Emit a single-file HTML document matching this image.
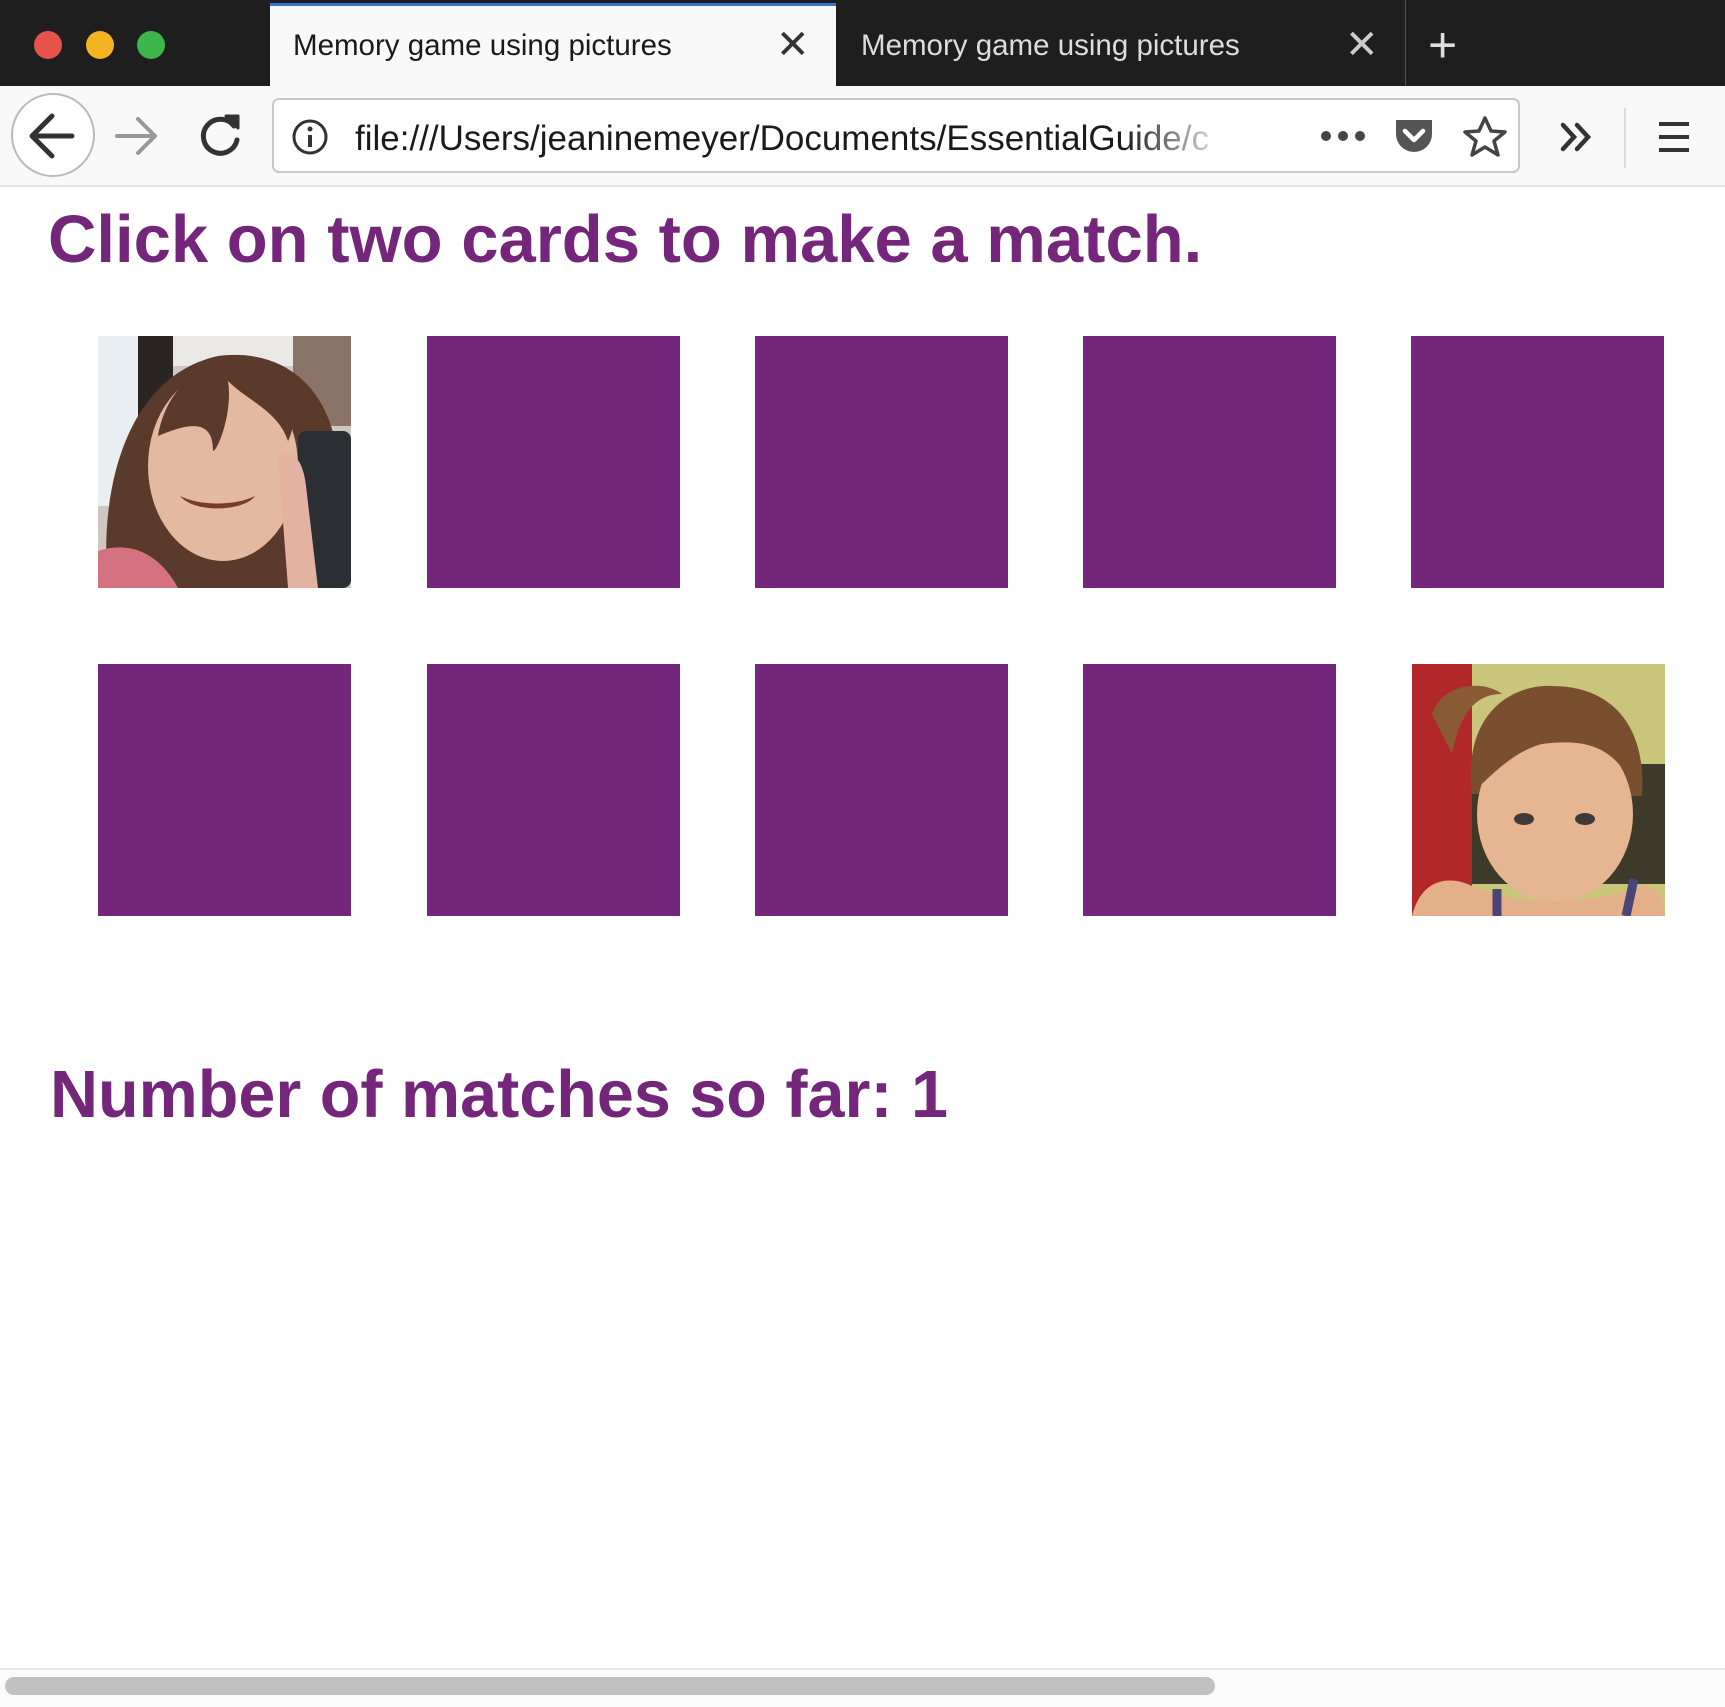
<!DOCTYPE html>
<html><head><meta charset="utf-8"><style>
*{margin:0;padding:0;box-sizing:border-box}
body{width:1725px;height:1707px;background:#fff;position:relative;overflow:hidden;font-family:"Liberation Sans",Arial,sans-serif}
.a{position:absolute}
.card{position:absolute;width:253px;height:252px;background:#74267a}
.h{position:absolute;color:#74267a;font-weight:bold;white-space:nowrap;line-height:1}
</style></head><body>
<div class="a" style="left:0;top:0;width:1725px;height:86px;background:#1e1e1e"></div>
<div class="a" style="left:34px;top:31px;width:28px;height:28px;border-radius:50%;background:#e5534b"></div>
<div class="a" style="left:86px;top:31px;width:28px;height:28px;border-radius:50%;background:#f2b421"></div>
<div class="a" style="left:137px;top:31px;width:28px;height:28px;border-radius:50%;background:#3cb64a"></div>
<div class="a" style="left:270px;top:3px;width:566px;height:84px;background:#f9f9fa;border-top:3px solid #3a73d0"></div>
<div class="a" style="left:293px;top:29px;font-size:29.5px;color:#1a1a1a">Memory game using pictures</div>
<div class="a" style="left:776px;top:22px;font-size:40px;color:#333;font-weight:300">✕</div>
<div class="a" style="left:861px;top:29px;font-size:29.5px;color:#ddd">Memory game using pictures</div>
<div class="a" style="left:1345px;top:22px;font-size:40px;color:#ccc">✕</div>
<div class="a" style="left:1405px;top:0;width:1px;height:86px;background:#555"></div>
<div class="a" style="left:1428px;top:16px;font-size:50px;color:#ddd;font-weight:300">+</div>
<div class="a" style="left:0;top:86px;width:1725px;height:101px;background:#f9f9fa;border-bottom:2px solid #e2e2e2"></div>
<div class="a" style="left:11px;top:93px;width:84px;height:84px;border-radius:50%;border:2px solid #bbb;background:#fff"></div>
<svg class="a" style="left:0;top:86px" width="272" height="100">
<path d="M32 50h40M52 30 32 50 52 70" stroke="#333" stroke-width="5" fill="none" stroke-linecap="round" stroke-linejoin="round"/>
<path d="M117 50h38M138 33 155 50 138 67" stroke="#999" stroke-width="4" fill="none" stroke-linecap="round" stroke-linejoin="round"/>
<path d="M234 40a17 17 0 1 0 3 14" stroke="#333" stroke-width="5" fill="none" stroke-linecap="round"/>
<path d="M226 30h12v12z" fill="#333" stroke="#333" stroke-width="3" stroke-linejoin="round"/>
</svg>
<div class="a" style="left:272px;top:98px;width:1248px;height:75px;background:#fff;border:2px solid #c8c8c8;border-radius:7px"></div>
<svg class="a" style="left:290px;top:117px" width="40" height="40"><circle cx="20" cy="20" r="16" stroke="#333" stroke-width="3" fill="none"/><circle cx="20" cy="12" r="2.5" fill="#333"/><path d="M20 18v12" stroke="#333" stroke-width="4"/></svg>
<div class="a" style="left:355px;top:119px;font-size:35px;color:#1a1a1a;width:875px;overflow:hidden;white-space:nowrap;-webkit-mask-image:linear-gradient(90deg,#000 88%,transparent)">file:///Users/jeaninemeyer/Documents/EssentialGuide/c</div>
<svg class="a" style="left:1310px;top:108px" width="415" height="60">
<circle cx="16" cy="28" r="5" fill="#444"/><circle cx="33" cy="28" r="5" fill="#444"/><circle cx="50" cy="28" r="5" fill="#444"/>
<path d="M86 12h36v14a18 18 0 0 1-36 0z" fill="#555"/><path d="M95 23l9 9 9-9" stroke="#fff" stroke-width="4.5" fill="none" stroke-linecap="round" stroke-linejoin="round"/>
<path d="M175 10l6 13 14 1-11 9 4 14-13-8-13 8 4-14-11-9 14-1z" stroke="#444" stroke-width="3.5" fill="none" stroke-linejoin="round"/>
<path d="M253 17l11 12-11 12M267 17l11 12-11 12" stroke="#333" stroke-width="4.5" fill="none" stroke-linecap="round"/>
<path d="M315 0v60" stroke="#ddd" stroke-width="2"/>
<path d="M349 16h30M349 29h30M349 42h30" stroke="#333" stroke-width="4"/>
</svg>
<div class="h" style="left:48px;top:206px;font-size:67px">Click on two cards to make a match.</div>
<svg class="a" style="left:98px;top:336px" width="253" height="252" viewBox="0 0 253 252">
<rect width="253" height="252" fill="#cfc7c0"/>
<rect x="0" y="0" width="40" height="170" fill="#e8eef2"/>
<rect x="40" y="0" width="35" height="120" fill="#2a2523"/>
<rect x="75" y="0" width="120" height="30" fill="#ebe9e6"/>
<rect x="195" y="0" width="58" height="90" fill="#8a7468"/>
<path d="M10 252C0 150 30 40 120 20c80-10 130 50 120 150v82z" fill="#5a3a2a"/>
<ellipse cx="125" cy="130" rx="75" ry="95" fill="#e3b9a1"/>
<path d="M60 100c10-60 60-80 90-75 40 10 55 50 40 80-10-30-40-40-60-60 5 30-10 70-15 70 0-30-20-30-55-15z" fill="#5a3a2a"/>
<path d="M82 160c20 10 55 10 75 0-10 15-60 18-75 0z" fill="#7b3a30"/>
<rect x="200" y="95" width="53" height="157" rx="8" fill="#2b2f33"/>
<path d="M180 120c10-10 25 0 28 30l12 102h-30z" fill="#e3b2a0"/>
<path d="M0 215c30-10 60 0 80 37H0z" fill="#d5727f"/>
</svg>
<div class="card" style="left:427px;top:336px"></div>
<div class="card" style="left:755px;top:336px"></div>
<div class="card" style="left:1083px;top:336px"></div>
<div class="card" style="left:1411px;top:336px"></div>
<div class="card" style="left:98px;top:664px"></div>
<div class="card" style="left:427px;top:664px"></div>
<div class="card" style="left:755px;top:664px"></div>
<div class="card" style="left:1083px;top:664px"></div>
<svg class="a" style="left:1412px;top:664px" width="253" height="252" viewBox="0 0 253 252">
<rect width="253" height="252" fill="#c9c57a"/>
<rect x="0" y="0" width="60" height="252" fill="#b2282a"/>
<rect x="60" y="100" width="193" height="120" fill="#3d3a2a"/>
<path d="M60 130C50 40 110 20 140 22c60 0 95 40 90 110z" fill="#7a4f30"/>
<path d="M20 50c10-30 50-35 70-20-20 0-40 10-50 60z" fill="#8a5a35"/>
<ellipse cx="143" cy="150" rx="78" ry="88" fill="#e6b591"/>
<path d="M70 120c10-60 40-85 80-85 50 0 75 40 70 85-20-40-50-45-90-40-20 5-40 20-60 40z" fill="#7a4f30"/>
<ellipse cx="112" cy="155" rx="10" ry="6" fill="#3f3a35"/><ellipse cx="173" cy="155" rx="10" ry="6" fill="#3f3a35"/>
<path d="M0 252c10-40 40-40 60-30 40 20 120 20 170 0 20 0 23 20 23 30z" fill="#e4b08a"/>
<path d="M85 225v27M222 215l-8 37" stroke="#4b4577" stroke-width="9"/>
</svg>
<div class="h" style="left:50px;top:1062px;font-size:66.5px">Number of matches so far: 1</div>
<div class="a" style="left:0;top:1668px;width:1725px;height:39px;background:#fafafa;border-top:2px solid #e8e8e8"></div>
<div class="a" style="left:5px;top:1677px;width:1210px;height:18px;border-radius:9px;background:#c1c1c1"></div>
</body></html>
